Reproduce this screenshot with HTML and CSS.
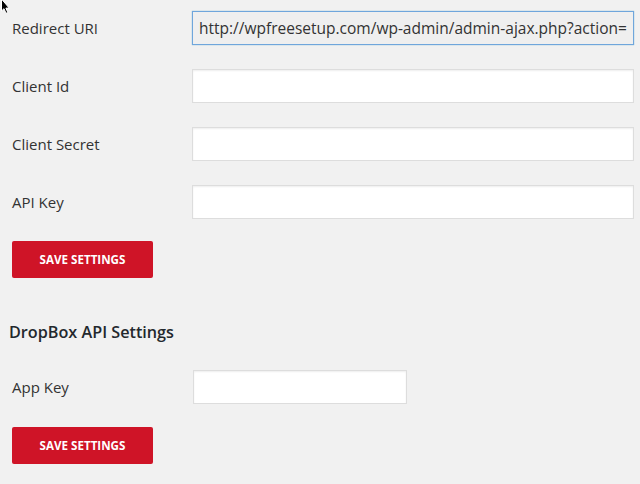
FILE: index.html
```html
<!DOCTYPE html>
<html>
<head>
<meta charset="utf-8">
<link rel="stylesheet" href="styles.css">
</head>
<body>
<svg class="cursor" width="12" height="16" viewBox="0 0 12 16"><path d="M1.5 -1 L1.5 11 L4 8.7 L6 13.3 L7.8 12.5 L5.9 8.1 L9.2 8.1 Z" fill="#000" stroke="#fff" stroke-width="1"/></svg>
<form class="page">
  <div class="settings">
    <label class="lbl">Redirect URI</label>
    <input class="field focused" type="text" value="http://wpfreesetup.com/wp-admin/admin-ajax.php?action=" readonly>
    <label class="lbl">Client Id</label>
    <input class="field" type="text">
    <label class="lbl">Client Secret</label>
    <input class="field" type="text">
    <label class="lbl">API Key</label>
    <input class="field" type="text">
  </div>
  <button class="btn first" type="button">SAVE SETTINGS</button>
  <h2 class="heading">DropBox API Settings</h2>
  <div class="settings small">
    <label class="lbl">App Key</label>
    <input class="field" type="text">
  </div>
  <button class="btn second" type="button">SAVE SETTINGS</button>
</form>
</body>
</html>
```
FILE: styles.css
```css
html, body {
  margin: 0;
  padding: 0;
  background: #f1f1f1;
}
body {
  font-family: "Open Sans", "Liberation Sans", sans-serif;
  color: #32373c;
  width: 640px;
  height: 484px;
  overflow: hidden;
  position: relative;
}
.cursor {
  position: absolute;
  left: 0;
  top: 0;
}
.page {
  padding: 11px 0 0 12px;
}
.settings {
  display: grid;
  grid-template-columns: 180px 442px;
  row-gap: 24px;
  align-items: center;
}
.settings.small {
  grid-template-columns: 181px 214px;
  margin-top: 26px;
}
.lbl {
  font-size: 15px;
  line-height: 20px;
  color: #333;
  padding-bottom: 1px;
}
.field {
  box-sizing: border-box;
  height: 34px;
  width: 100%;
  margin: 0;
  border: 1px solid #ddd;
  background: #fff;
  box-shadow: inset 0 1px 2px rgba(0,0,0,0.07);
  font-family: "Open Sans", "Liberation Sans", sans-serif;
  font-size: 15.5px;
  color: #333;
  padding: 0 6px;
  outline: none;
}
.field.focused {
  background: #efefef;
  border-color: #6fa6dc;
  box-shadow: 0 0 1px rgba(30,140,190,0.6);
}
.btn {
  display: block;
  box-sizing: border-box;
  width: 141px;
  height: 37px;
  margin: 0;
  padding: 0;
  border: none;
  border-radius: 2px;
  background: #cf1427;
  color: #fff;
  font-family: "Open Sans", "Liberation Sans", sans-serif;
  font-weight: 700;
  font-size: 11.6px;
}
.btn.first {
  margin-top: 22px;
}
.btn.second {
  margin-top: 23px;
}
.heading {
  margin: 42px 0 0 -3px;
  font-size: 16.2px;
  line-height: 24px;
  font-weight: 600;
  color: #23282d;
}
```
